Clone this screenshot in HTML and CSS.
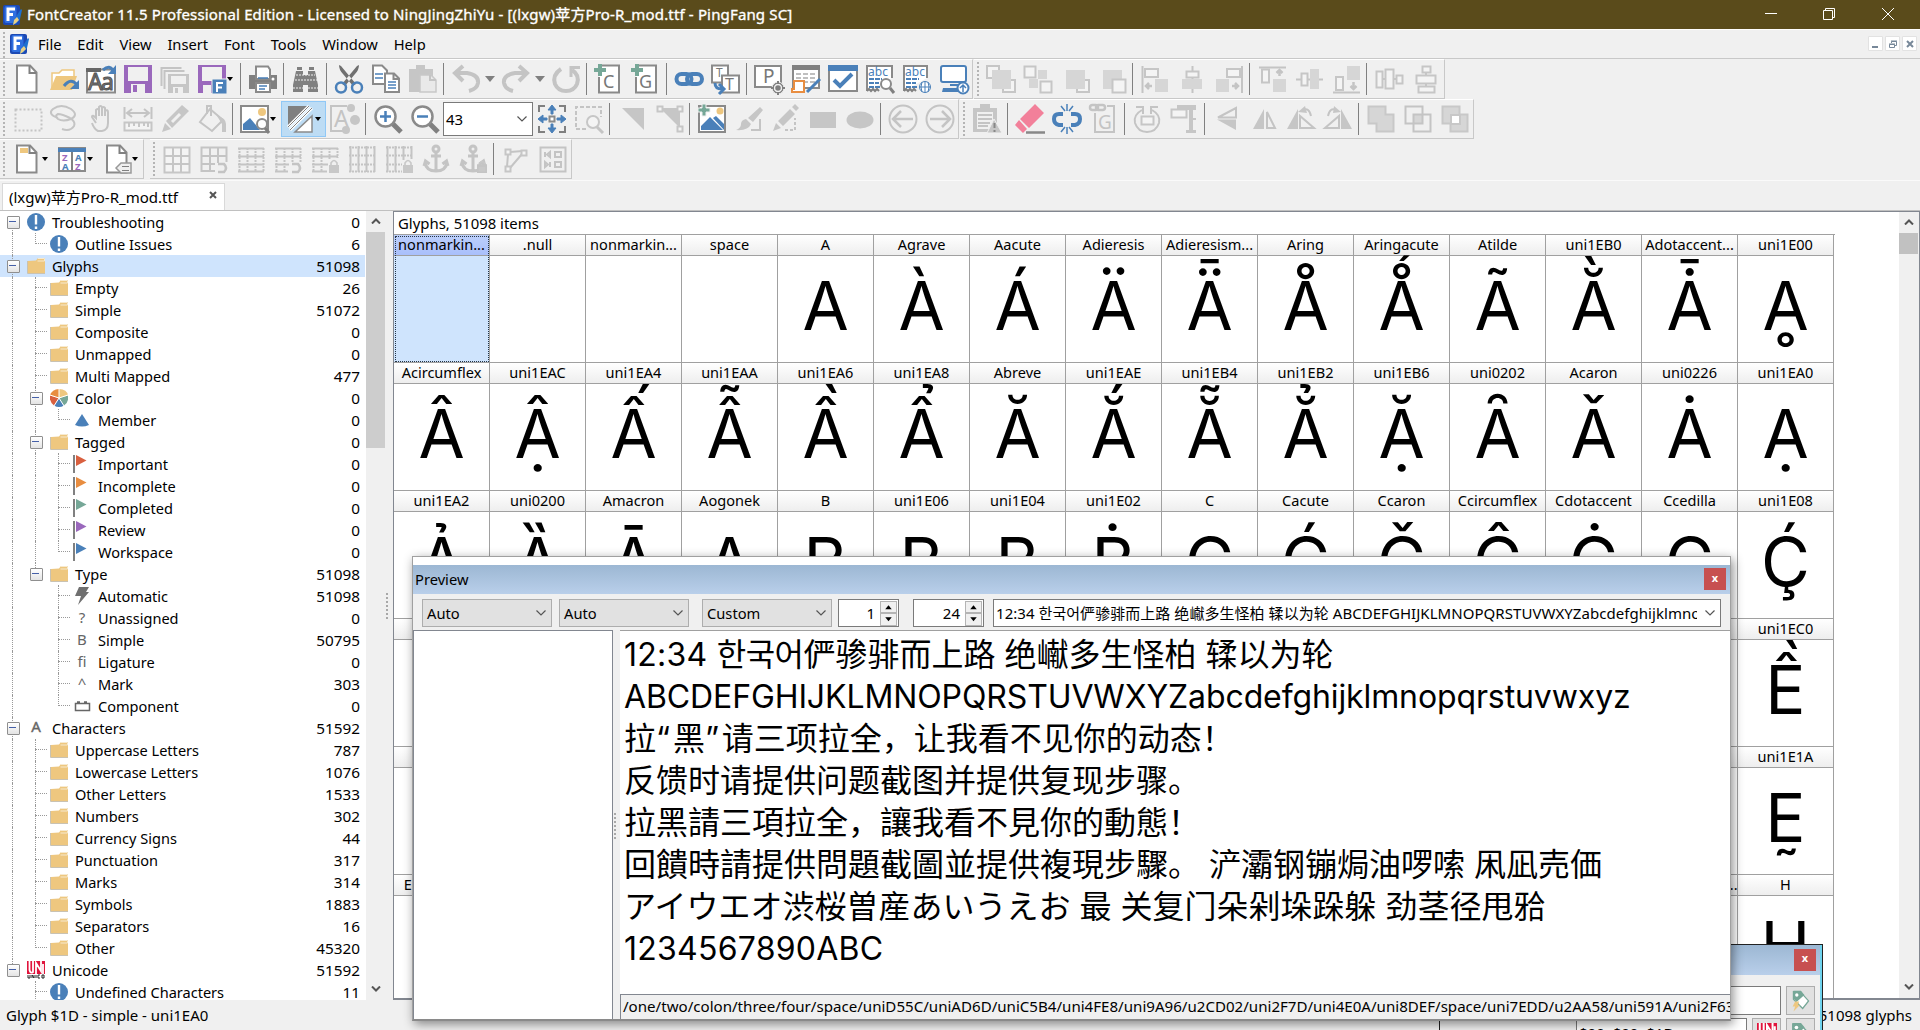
FILE: index.html
```html
<!DOCTYPE html>
<html lang="zh-CN">
<head>
<meta charset="utf-8">
<title>FontCreator 11.5 Professional Edition</title>
<link rel="stylesheet" href="styles.css">
</head>
<body>
<svg class="defs" aria-hidden="true">
  <symbol id="app" viewBox="0 0 20 20"><rect x="1" y="0" width="17" height="20" rx="2" fill="#1c49b4"/><rect x="2.500" y="1" width="12" height="17" rx="2" fill="#2f6fe0"/><path d="M6 16V4h7M6 9.500h5" stroke="#fff" stroke-width="3" fill="none"/><path d="M10 18l5-8 4-6 1 1-2 9-4 5z" fill="#1d6fd0"/><path d="M11 20l1-5 3-3 2 3-3 3z" fill="#e8cf86"/></symbol>
  <symbol id="folder" viewBox="0 0 18 18"><path d="M1 4l8-.5 2-2.500h7v15H1z" fill="#eec77f"/><path d="M11 1.500h6.500v2.500H10.500" stroke="#f7ead0" fill="none"/><path d="M.5 4v12.500H18" stroke="#c9c2b2" fill="none"/></symbol>
  <symbol id="warn" viewBox="0 0 18 18"><circle cx="9" cy="9" r="9" fill="#4a80b9"/><path d="M9 2v9.500M9 13.500v2.500" stroke="#fff" stroke-width="2.400"/></symbol>
  <symbol id="flag" viewBox="0 0 18 18"><path d="M2 0v18" stroke="#808080" stroke-width="2"/><path d="M4 0l10.500 5.500L4 11z" fill="currentColor"/></symbol>
  <symbol id="unicode" viewBox="0 0 18 18"><path d="M0 0h18v13H0z" fill="#e0143c"/><path d="M2.500 0v9q1 4 3.500 2V0M9 13V2l5 8V0M16 3v10" stroke="#fff" stroke-width="1.800" fill="none"/><path d="M0 13.500h18v4.500H0z" fill="#fff"/><path d="M1 14v3h2v-3M5 17v-3l2 3v-3M9 14v3M13 14h-2v3h2M15 14h2v3h-2z" stroke="#222" fill="none"/></symbol>
  <symbol id="tag" viewBox="0 0 20 24"><path d="M1 2h8l10 11-7 9L1 11z" fill="#fff" stroke="#76a797" stroke-width="1.500"/><path d="M1 1h9l4 5-9 8-4-4z" fill="#76a797"/><circle cx="5" cy="6" r="2" fill="#fff"/></symbol>
  <symbol id="bolt" viewBox="0 0 10 12"><path d="M4 0h5L7 4h3L2 12l2-6H1z" fill="#eec77f"/></symbol>
  <symbol id="lock" viewBox="0 0 10 14"><path d="M2 7V4q3-5 6 0v3" stroke="#c8c8c8" stroke-width="1.600" fill="none"/><path d="M0 6h10v8H0z" fill="#c8c8c8"/></symbol>
  <symbol id="anchor" viewBox="0 0 30 30"><circle cx="15" cy="5" r="3"/><path d="M15 8v18M10 12h10M4 18q1 9 11 9t11-9M3 22l1.500-5 4 3M27 22l-1.500-5-4 3"/></symbol>
</svg>

<header class="titlebar">
  <svg class="app"><use href="#app"/></svg>
  <h1>FontCreator 11.5 Professional Edition - Licensed to NingJingZhiYu - [(lxgw)苹方Pro-R_mod.ttf - PingFang SC]</h1>
  <svg class="wctl" viewBox="0 0 170 29"><path d="M15 13.500h12"/><path d="M73.500 10.500h9v9h-9zM75.500 10.500v-2h9v9h-2"/><path d="M132 8l12 12M144 8l-12 12"/></svg>
</header>

<nav class="menubar">
  <svg class="app"><use href="#app"/></svg>
  <span>File</span><span>Edit</span><span>View</span><span>Insert</span><span>Font</span><span>Tools</span><span>Window</span><span>Help</span>
  <svg class="mdi" viewBox="0 0 52 16"><path class="bx" d="M.5.5h14v14H.5zM17.500.5h14v14h-14zM34.500.5h14v14h-14z"/><path d="M4 11h6" stroke-width="2"/><path d="M21.500 8.500h5v3h-5zM21 8h6M23.500 7V5.500h5v4H27M23 5h6"/><path d="M39 5l6 6M45 5l-6 6" stroke-width="2"/></svg>
</nav>

<section class="bars">
 <div class="row">
  <div class="bar">
   <b><svg viewBox="0 0 30 30"><path class="w" d="M5 1.500h13l6.500 7v20H5z"/><path class="n" d="M17.500 2v7H24"/></svg></b>
   <b><svg viewBox="0 0 30 30"><path d="M3 25V9h7l3-3h12v6" fill="#fff" stroke="#eec77f" stroke-width="1.500"/><path d="M1 26l6-14h21l-5 14z" fill="#eec77f"/><path d="M15 22q7-9 13-1" class="nb" stroke-width="3"/><path d="M30 16v9h-9z" fill="#4a80b9"/></svg></b>
   <b><svg viewBox="0 0 30 30"><path class="w" d="M1 5.500h28v23H1z"/><path d="M0 4h15v4H0z" fill="#666"/><text x="2" y="26" font-size="23" fill="#555" stroke="#555" textLength="26">Aa</text><path d="M17 6q7-6 10 1" class="nb" stroke-width="3"/><path d="M30 1v9h-8z" fill="#4a80b9"/></svg></b>
   <b><svg viewBox="0 0 30 30"><path d="M1 1h28v28H1z" fill="#9a68bc"/><path d="M5 3h20v14H5zM8 20h14v9H8z" fill="#f0f0f0"/><path d="M10 21h4v7h-4z" fill="#9a68bc"/></svg></b>
   <b><svg viewBox="0 0 30 30"><path class="nd" d="M1.500 22V4h20M4.500 25V7h20"/><path class="d" d="M8 10h21v19H8z"/><path d="M11 12h15v8H11zM13 23h10v6H13z" fill="#f0f0f0"/><path class="d" d="M15 24h3v5h-3z"/></svg></b>
   <b class="drop s"><svg viewBox="0 0 30 30"><path d="M1 1h28v28H1z" fill="#9a68bc"/><path d="M5 3h20v14H5zM6 21h8v8H6z" fill="#f0f0f0"/><path d="M15 15h15v15H15z" fill="#4a80b9" stroke="#f0f0f0"/><path d="M20 28v-9h6M20 23.500h5" stroke="#fff" stroke-width="2" fill="none"/></svg></b>
   <i></i>
   <b><svg viewBox="0 0 30 30"><path class="g" d="M1 11h28v14H1z"/><path class="w" d="M8 2.500h12l2 3V15H8zM8 19h14v9H8z"/><path class="nb" d="M11 22h8M11 25h6M10 14h10" stroke-width="1.500"/><circle cx="25" cy="15" r="1.500" fill="#fff"/></svg></b>
   <i></i>
   <b><svg viewBox="0 0 30 30"><path class="g" d="M5 7h7v4h5V7h7l3 14v7H17v-7h-5v7H2v-7zM6 3h5v3H6zM18 3h5v3h-5z"/><path d="M2 24h10M17 24h10M5 11h19M4 16h22" stroke="#f0f0f0" stroke-dasharray="2 1"/></svg></b>
   <i></i>
   <b><svg viewBox="0 0 30 30"><path d="M5 1q0 5 4 9l10 12 3-2L7 2zM25 1q0 5-4 9L11 22l-3-2L23 2z" fill="#707070"/><g class="nb" stroke-width="2.500"><circle cx="7" cy="23.500" r="5"/><circle cx="23" cy="23.500" r="5"/></g></svg></b>
   <b><svg viewBox="0 0 30 30"><path class="w" d="M2 1.500h9l5 5V20H2z"/><path class="nb" d="M4 10h8M4 14h8" stroke-width="1.500"/><path class="w" d="M14 9.500h9l5 5V28H14zM22.500 10v5H28"/><path class="nb" d="M17 18h8M17 21h8M17 24h8" stroke-width="1.500"/></svg></b>
   <b><svg viewBox="0 0 30 30"><path class="d" d="M1 5h24v23H1zM8 1h9v5H8z"/><path d="M12 11h11l5 5v12H12z" fill="#e9e9e9" stroke="#c8c8c8" stroke-width="1.500"/><path class="nd" d="M22 11v5h6"/></svg></b>
   <i></i>
   <b class="drop"><svg viewBox="0 0 30 30"><path class="nd" d="M4 9h12q12 2 11 10-1 6-9 8" stroke-width="4"/><path class="nd" d="M12 2L4 9l8 8" stroke-width="4"/></svg></b>
   <b class="drop"><svg viewBox="0 0 30 30"><path class="nd" d="M26 9H14Q2 11 3 19q1 6 9 8" stroke-width="4"/><path class="nd" d="M18 2l8 7-8 8" stroke-width="4"/></svg></b>
   <b><svg viewBox="0 0 30 30"><path class="nd" d="M10 5Q1 11 4 20q3 7 11 7t11-7q3-9-5-14" stroke-width="4"/><path class="nd" d="M29 3.500h-9V13" stroke-width="3"/></svg></b>
   <i></i>
   <b><svg viewBox="0 0 30 30"><path class="w" d="M7 1.500h18v27H5V13"/><path class="gr" d="M4 0h4v4h4v4H8v4H4V8H0V4h4z"/><text x="9" y="24" font-size="18">C</text></svg></b>
   <b><svg viewBox="0 0 30 30"><path class="w" d="M7 1.500h18v27H5V13"/><path class="gr" d="M4 0h4v4h4v4H8v4H4V8H0V4h4z"/><text x="8" y="24" font-size="18">G</text></svg></b>
   <i></i>
   <b><svg viewBox="0 0 30 30"><g class="nb" stroke-width="4"><rect x="2.500" y="10" width="15" height="10" rx="5"/><rect x="13" y="10" width="15" height="10" rx="5"/></g></svg></b>
   <b><svg viewBox="0 0 30 30"><path class="w" d="M1 1.500h16v17H1z"/><text x="5" y="13" font-size="12">T</text><path class="w" d="M11 11.500h17v17H11z"/><text x="14" y="26" font-size="16">T</text><path class="nb" d="M4 19q0 6 7 6M8 20l5 5-5 5" stroke-width="3"/></svg></b>
   <i></i>
   <b><svg viewBox="0 0 30 30"><path class="w" d="M1 2h26v21H1z"/><text x="9" y="19" font-size="19">P</text><circle cx="24" cy="24" r="6" class="g" stroke="#f0f0f0"/><circle cx="24" cy="24" r="3.500" fill="none" stroke="#f0f0f0" stroke-width="1.500"/><path d="M24 17v3M24 28v3M17 24h3M28 24h3" stroke="#808080" stroke-width="2"/></svg></b>
   <b><svg viewBox="0 0 30 30"><path class="w" d="M2 2h26v22H2z"/><path class="g" d="M1 1h28v5H1z"/><path d="M5 10h20M5 14h20M5 18h20" stroke="#aaa" stroke-width="1.500" stroke-dasharray="5 2"/><path d="M3 17h10v11H1v-3h2z" fill="#fff" stroke="#e88d40" stroke-width="2"/><path class="nb" d="M16 28L29 15" stroke-width="3"/></svg></b>
   <b><svg viewBox="0 0 30 30"><path class="w" d="M1 2h28v25H1z"/><path d="M0 1h30v6H0z" fill="#4a80b9"/><path class="nb" d="M6 16l6 6 12-12" stroke-width="4"/></svg></b>
   <b><svg viewBox="0 0 30 30"><path d="M2 27V2h25v12" class="w"/><text x="3" y="12" font-size="12" class="bt" textLength="20">abc</text><path class="nb" d="M4 15h13M4 19h10M4 23h12" stroke-dasharray="5 1" stroke-width="2"/><path d="M2 27l2-2 2 2 2-2 2 2 2-2 2 2" class="n"/><circle cx="21" cy="20" r="5" class="w"/><path d="M25 24l4 5" class="n" stroke-width="3"/></svg></b>
   <b><svg viewBox="0 0 30 30"><path d="M2 27V2h23v12" class="w"/><text x="3" y="12" font-size="12" class="bt" textLength="20">abc</text><path class="nb" d="M4 15h13M4 19h10M4 23h12" stroke-dasharray="5 1" stroke-width="2"/><path d="M2 27l2-2 2 2 2-2 2 2 2-2 2 2" class="n"/><circle cx="23" cy="23" r="5.500" fill="#fff" stroke="#4a80b9"/><path class="nb" d="M17.500 23h11M23 17.500v11M20 18q-2 5 0 10M26 18q2 5 0 10" stroke-width="1"/></svg></b>
   <b><svg viewBox="0 0 30 30"><rect x="2" y="2" width="25" height="16" rx="2" fill="#fff" stroke="#4a80b9" stroke-width="2"/><path d="M11 20h8v2h-8zM4 24h15v4H3z" fill="#4a80b9"/><circle cx="24" cy="24" r="5.500" fill="#fff" stroke="#4a80b9" stroke-width="2"/><path class="nb" d="M24 28v-7M21 24l3-3 3 3" stroke-width="1.500"/></svg></b>
  </div>
  <div class="bar">
   <b><svg viewBox="0 0 30 30"><path class="wd" d="M1 2h12v12H1zM17 16h12v12H17z"/><path class="df" d="M6 6h19v19H6z"/></svg></b>
   <b><svg viewBox="0 0 30 30"><path class="df" d="M15 6h9v9h-9zM6 15h9v9H6z"/><path class="wd" d="M1.500 2.500h11v11h-11zM17.500 17.500h11v11h-11z"/></svg></b>
   <b><svg viewBox="0 0 30 30"><path class="wd" d="M17 16h12v12H17z"/><path class="df" d="M6 6h19v19H6z"/></svg></b>
   <b><svg viewBox="0 0 30 30"><path class="df" d="M6 6h19v19H6z"/><path class="wd" d="M15.500 15.500h13v13h-13z"/></svg></b>
   <i></i>
   <b><svg viewBox="0 0 30 30"><path class="nd" d="M2.500 2v27"/><path class="wd" d="M5 5h13v8H5z"/><path class="df" d="M15 15h13v13H15z"/><path class="nd" d="M12 22H6M9 19l-3 3 3 3" stroke-width="2.500"/></svg></b>
   <b><svg viewBox="0 0 30 30"><path class="nd" d="M15.500 2v27"/><path class="wd" d="M9.500 7.500h12v6h-12z"/><path class="df" d="M5 15h20v10H5z"/></svg></b>
   <b><svg viewBox="0 0 30 30"><path class="nd" d="M28 2v27"/><path class="wd" d="M13 5h13v8H13z"/><path class="df" d="M2 15h13v13H2z"/><path class="nd" d="M18 22h6M21 19l3 3-3 3" stroke-width="2.500"/></svg></b>
   <i></i>
   <b><svg viewBox="0 0 30 30"><path class="nd" d="M2 3.500h27"/><path class="wd" d="M5 5.500h7v13H5z"/><path class="df" d="M16 15h13v13H16z"/><path class="nd" d="M22.500 12V6M19.500 9l3-3 3 3" stroke-width="2.500"/></svg></b>
   <b><svg viewBox="0 0 30 30"><path class="nd" d="M2 15.500h27"/><path class="wd" d="M7.500 9.500h6v12h-6z"/><path class="df" d="M16 5h9v20h-9z"/></svg></b>
   <b><svg viewBox="0 0 30 30"><path class="nd" d="M2 28.500h27"/><path class="wd" d="M5 13h7v13H5z"/><path class="df" d="M16 2h13v14H16z"/><path class="nd" d="M22.500 18v6M19.500 22l3 3 3-3" stroke-width="2.500"/></svg></b>
   <i></i>
   <b><svg viewBox="0 0 30 30"><path class="nd" d="M2 15h27"/><path class="wd" d="M2.500 7.500h6v16h-6zM11.500 5.500h8v19h-8zM22.500 11.500h6v8h-6z"/></svg></b>
   <b><svg viewBox="0 0 30 30"><path class="nd" d="M15 2v26"/><path class="wd" d="M11.500 2.500h8v6h-8zM5.500 11.500h19v8h-19zM7.500 22.500h16v6h-16z"/></svg></b>
  </div>
 </div>
 <div class="row">
  <div class="bar">
   <b><svg viewBox="0 0 30 30"><path class="nd" d="M3.500 5.500h26v21h-26z" stroke-dasharray="2 2"/></svg></b>
   <b><svg viewBox="0 0 30 30"><path class="nd" d="M9 14Q-2 10 4 5q8-6 18 0 8 6 0 10-8 3-13 0-4-3 0-5 4 0 12 4 6 4 4 8-4 6-12 3"/></svg></b>
   <b><svg viewBox="0 0 30 30"><path class="nd" d="M9 19l-4-6q0-3 4 1V6q2-2 3 0v6-9q2-2 3 0v9-8q2-2 3 0v8-5q3-2 3 1v11q0 7-6 8h-4q-4-2-6-8" transform="translate(1)"/></svg></b>
   <b><svg viewBox="0 0 30 30"><path class="nd" d="M1.500 3v12M28.500 3v12M4 9h22M9 5L4 9l5 4M21 5l5 4-5 4"/><path class="wd" d="M1.500 18.500h27v8h-27zM6 19v4M11 19v3M16 19v4M21 19v3M25 19v4"/></svg></b>
   <b><svg viewBox="0 0 30 30"><path class="d" d="M2 28l3-9 6 6zM6 17L22 1l7 6-17 17z"/><path d="M12 18l8-8" stroke="#f0f0f0" stroke-width="3"/></svg></b>
   <b><svg viewBox="0 0 30 30"><path class="nd" d="M13 5l13 11-11 11L3 18zM10 10V2h4v10"/><path class="d" d="M20 12q9 2 9 8v8h-4v-8z"/></svg></b>
   <i></i>
   <b class="drop s"><svg viewBox="0 0 30 30"><path class="w" d="M1 2h27v26H1z"/><circle cx="22" cy="8" r="4" fill="#eec77f"/><path d="M3 26v-6l7-6 10 12z" fill="#4a80b9"/><circle cx="22" cy="20" r="5" class="w"/><path class="n" d="M25 24l4 5" stroke-width="3"/></svg></b>
   <b class="drop s on"><svg viewBox="0 0 30 30"><path d="M3 2h20L3 22z" fill="#808080"/><path d="M5 26L27 4M3 23L24 2" stroke="#fff" stroke-width="3"/><path d="M5 26L27 4M3 23L24 2" stroke="#808080"/><path class="w" d="M27 12v16H10z" stroke-width="1.500"/></svg></b>
   <b><svg viewBox="0 0 30 30"><path class="nd" d="M17 2H1v25h13"/><text x="4" y="23" font-size="23" class="dt">A</text><circle class="d" cx="21" cy="4" r="4"/><circle class="d" cx="25" cy="16" r="5"/><circle class="d" cx="16" cy="26" r="4"/></svg></b>
   <i></i>
   <b><svg viewBox="0 0 30 30"><path class="n" d="M20 20l8 8" stroke-width="5"/><circle cx="12.500" cy="12.500" r="10" class="w" stroke-width="2.500"/><path class="nb" d="M7 12.500h11M12.500 7v11" stroke-width="2.500"/></svg></b>
   <b><svg viewBox="0 0 30 30"><path class="n" d="M20 20l8 8" stroke-width="5"/><circle cx="12.500" cy="12.500" r="10" class="w" stroke-width="2.500"/><path class="nb" d="M7 12.500h11" stroke-width="2.500"/></svg></b>
   <span class="zoombox">43<svg class="chev" viewBox="0 0 10 6"><path d="M.5.5L5 5 9.500.5"/></svg></span>
   <b><svg viewBox="0 0 30 30"><path class="n" d="M2 8V2h6M22 2h6v6M28 22v6h-6M8 28H2v-6"/><path class="w" d="M12.500 12.500h5v5h-5z"/><path d="M15 1l4 5h-3v4h-2V6h-3zM15 29l4-5h-3v-4h-2v4h-3zM1 15l5-4v3h4v2H6v3zM29 15l-5-4v3h-4v2h4v3z" fill="#4a80b9" stroke="#4a80b9"/></svg></b>
   <b><svg viewBox="0 0 30 30"><path class="nd" d="M12 25H2V3h25v10" stroke-dasharray="4 2"/><circle cx="19" cy="18" r="6" class="wd"/><path class="nd" d="M23 23l6 6" stroke-width="3"/></svg></b>
   <i></i>
   <b><svg viewBox="0 0 30 30"><path class="d" d="M5 4h22v22z"/></svg></b>
   <b><svg viewBox="0 0 30 30"><path class="d" d="M6 4h20v20z"/><path class="wd" d="M3.500 2.500h5v5h-5zM23.500 2.500h5v5h-5zM23.500 22.500h5v5h-5z"/></svg></b>
   <i></i>
   <b><svg viewBox="0 0 30 30"><path class="w" d="M2 2h26v26H2z"/><path class="gr" stroke="#f0f0f0" d="M5 0h4v4h4v4H9v4H5V8H1V4h4z"/><circle cx="23" cy="7" r="3.500" fill="#eec77f"/><path d="M4 26v-4l9-9 13 13zM16 14l3-2 8 8v6z" fill="#4a80b9"/></svg></b>
   <b><svg viewBox="0 0 30 30"><path class="d" d="M26 3l3 3-10 12-5-4zM12 15l5 5q-3 7-15 6 5-2 5-6t5-5z"/><path class="nd" d="M17 26h9V15"/></svg></b>
   <b><svg viewBox="0 0 30 30"><path class="d" d="M2 27l3-8 5 5zM7 17L19 5l5 5-12 12zM21 3l3-3 4 4-3 3z"/><path class="nd" d="M14 26h10V14" stroke-dasharray="3 2"/></svg></b>
   <b><svg viewBox="0 0 30 30"><path class="d" d="M2 8h26v16H2z"/></svg></b>
   <b><svg viewBox="0 0 30 30"><ellipse class="d" cx="15" cy="16" rx="13.500" ry="8.500"/></svg></b>
   <i></i>
   <b><svg viewBox="0 0 30 30"><circle class="nd" cx="15" cy="15" r="13.500"/><path class="nd" d="M25 15H6M13 7l-8 8 8 8" stroke-width="2.500"/></svg></b>
   <b><svg viewBox="0 0 30 30"><circle class="nd" cx="15" cy="15" r="13.500"/><path class="nd" d="M5 15h19M17 7l8 8-8 8" stroke-width="2.500"/></svg></b>
  </div>
  <div class="bar">
   <b><svg viewBox="0 0 30 30"><path class="d" d="M1 4h24v24H1zM8 0h10v7H8z"/><path d="M5 8h16v17H5z" fill="#f0f0f0"/><path class="nd" d="M6 11h14M6 15h14M6 19h12M6 22h10"/><path class="d" d="M22 15l8 14H15z" stroke="#f0f0f0"/><path d="M22.500 19v5M22.500 26v2" stroke="#888" stroke-width="2"/></svg></b>
   <i></i>
   <b><svg viewBox="0 0 30 30"><path d="M20 0l9 9-15 15-9-9zM4 16l8 9-4 4-8-8z" fill="#f2809a"/><path d="M11 28.500h19" stroke="#888" stroke-width="2.500"/></svg></b>
   <b><svg viewBox="0 0 30 30"><path class="nb" d="M11 21H7q-5-1-5-6t5-5h4M19 21h4q5-1 5-6t-5-5h-4" stroke-width="4"/><path class="nb" d="M15 0v7M9 2l4 5M21 2l-4 5M15 30v-7M9 28l4-5M21 28l-4-5" stroke-width="1.500"/></svg></b>
   <b><svg viewBox="0 0 30 30"><path class="nd" d="M18 2h7v26H6V9"/><text x="9" y="25" font-size="19" class="dt">G</text><g class="nd" stroke-width="2.500"><rect x="1" y="1" width="8" height="5" rx="2.500"/><rect x="7" y="1" width="9" height="5" rx="2.500"/></g></svg></b>
   <i></i>
   <b><svg viewBox="0 0 30 30"><path class="nd" d="M10 6Q1 11 3 19q3 9 12 9t12-9q2-8-7-13M4 3h7v7M26 3h-7v7"/><path class="wd" d="M9.500 12.500h12v8h-12z"/></svg></b>
   <b><svg viewBox="0 0 30 30"><path class="d" d="M8 1h19v5h-3v20h3v3H17v-3h3V6H8z"/><path class="wd" d="M2.500 5.500h15v8h-15zM20 15h7"/></svg></b>
   <i></i>
   <b><svg viewBox="0 0 30 30"><path class="nd" d="M6 13.500L24 4v9.500z"/><path class="d" d="M5 15.500h19V26z"/></svg></b>
   <b><svg viewBox="0 0 30 30"><path class="d" d="M4 25L15 5v20z"/><path class="nd" d="M18 24V8l8 16z"/></svg></b>
   <b><svg viewBox="0 0 30 30"><path class="d" d="M1 25L12 5v20z"/><path class="nd" d="M14 24V12l14 12zM17 6q6-3 8 6"/><path class="d" d="M12 8l7-6 2 7z"/></svg></b>
   <b><svg viewBox="0 0 30 30"><path class="d" d="M29 25L18 5v20z"/><path class="nd" d="M16 24V12L2 24zM5 12q2-9 8-6"/><path class="d" d="M18 8l-7-6-1 7z"/></svg></b>
   <i></i>
   <b><svg viewBox="0 0 30 30"><path class="df" d="M2.500 2.500h17v8h8v17h-17v-8h-8z" stroke="#c8c8c8" stroke-width="2"/></svg></b>
   <b><svg viewBox="0 0 30 30"><path class="df" d="M11 11h9v9h-9z"/><path class="nd" d="M2.500 2.500h17v17h-17zM10.500 10.500h17v17h-17z"/></svg></b>
   <b><svg viewBox="0 0 30 30"><path class="df" d="M2.500 2.500h17v8h8v17h-17v-8h-8z" stroke="#c8c8c8" stroke-width="2"/><path d="M11 11h9v9h-9z" fill="#fff" stroke="#c8c8c8" stroke-width="2"/></svg></b>
  </div>
 </div>
 <div class="row">
  <div class="bar">
   <b class="drop s"><svg viewBox="0 0 30 30"><path class="w" d="M5 1.500h13l6.500 7v20H5z"/><path class="n" d="M17.500 2v7H24"/><path d="M8 4h8v5H8z" fill="#eec77f"/></svg></b>
   <b class="drop s"><svg viewBox="0 0 30 30"><path class="w" d="M2 4h26v23H2z"/><path d="M1 4h28v4H1z" fill="#4a80b9"/><path class="n" d="M15 8v19"/><g font-size="9.500" font-weight="bold"><text x="5" y="16.500" class="pt">Z</text><text x="5" y="26" class="bt">A</text><text x="18" y="16.500" class="bt">A</text><text x="18" y="26" class="pt">Z</text></g></svg></b>
   <b class="drop s"><svg viewBox="0 0 30 30"><path class="w" d="M5 1.500h13l6.500 7v20H5z"/><path class="n" d="M17.500 2v7H24"/><path d="M14 24l5-5h10v10H19z" fill="#f0f0f0" stroke="#999" stroke-width="1.500"/><path class="n thin" d="M20 22.500h7M20 26.500h7"/></svg></b>
  </div>
  <div class="bar gap">
   <b><svg viewBox="0 0 30 30"><path class="wd" d="M2.500 3.500h25v25h-25zM11 3v25M19 3v25M2 12h25M2 20h25"/></svg></b>
   <b><svg viewBox="0 0 30 30"><path class="nd" d="M16 27H2.500V3.500h25V18M11 3v24M19 3v16M2 12h25M2 20h14"/><path class="nd" d="M19 20h6q4 4 0 8h-6" stroke-width="2.500"/></svg></b>
   <b><svg viewBox="0 0 30 30"><path class="nd" d="M2 4.500h26M2 12.500h26M2 20.500h26M2 27.500h26"/><path class="nd" d="M3.500 4v24M11.500 4v24M19.500 4v24M27.500 4v24" stroke-dasharray="2 1"/></svg></b>
   <b><svg viewBox="0 0 30 30"><path class="nd" d="M2 4.500h26M2 12.500h26M2 20.500h14M2 27.500h13"/><path class="nd" d="M3.500 4v24M11.500 4v24M19.500 4v15M27.500 4v14" stroke-dasharray="2 1"/><path class="nd" d="M19 20h6q4 4 0 8h-6" stroke-width="2.500"/></svg></b>
   <b><svg viewBox="0 0 30 30"><path class="nd" d="M2 4.500h26M2 12.500h26M2 20.500h16M2 27.500h15"/><path class="nd" d="M3.500 4v24M11.500 4v24M19.500 4v12M27.500 4v10" stroke-dasharray="2 1"/><use href="#lock" x="19" y="15" width="10" height="14"/></svg></b>
   <b><svg viewBox="0 0 30 30"><path class="nd" d="M3.500 2v26M11.500 2v26M19.500 2v26M27.500 2v26"/><path class="nd" d="M2 3.500h26M2 11.500h26M2 20.500h26M2 27.500h26" stroke-dasharray="2 1"/></svg></b>
   <b><svg viewBox="0 0 30 30"><path class="nd" d="M3.500 2v26M11.500 2v26M19.500 2v14M27.500 2v13"/><path class="nd" d="M2 3.500h26M2 11.500h26M2 20.500h16M2 27.500h16" stroke-dasharray="2 1"/><use href="#lock" x="19" y="15" width="10" height="14"/></svg></b>
   <b><svg viewBox="0 0 30 30" class="nd anc"><use href="#anchor"/></svg></b>
   <b><svg viewBox="0 0 30 30" class="nd anc"><use href="#anchor"/><use href="#lock" x="19" y="16" width="10" height="13"/></svg></b>
   <i></i>
   <b><svg viewBox="0 0 30 30"><path class="nd" d="M7 10l-1 13M9 8l13-1M21 10L9 24"/><path class="wd" d="M4.500 5.500h5v5h-5zM20.500 6.500h5v5h-5zM4.500 22.500h5v5h-5z"/></svg></b>
   <b><svg viewBox="0 0 30 30"><path class="nd" d="M2.500 3.500h25v24h-25z"/><path class="nd" d="M7 8v5M12 8l-3 2.500 3 2.500zM12 18v5M7 18l3 2.500L7 23zM17 8h6v5h-6zM17 18h6v5h-6z"/></svg></b>
  </div>
 </div>
</section>

<div class="tabs"><div class="tab"><span>(lxgw)苹方Pro-R_mod.ttf</span><svg viewBox="0 0 8 8"><path d="M1 1l6 6M7 1L1 7"/></svg></div></div>

<main>
 <aside>
  <ul class="tree">
   <li><s class="x first"></s><svg class="ti"><use href="#warn"/></svg><span>Troubleshooting</span><em>0</em></li>
   <li><s class="v"></s><s class="l"></s><svg class="ti"><use href="#warn"/></svg><span>Outline Issues</span><em>6</em></li>
   <li class="sel"><s class="x"></s><svg class="ti"><use href="#folder"/></svg><span>Glyphs</span><em>51098</em></li>
   <li><s class="v"></s><s class="t"></s><svg class="ti"><use href="#folder"/></svg><span>Empty</span><em>26</em></li>
   <li><s class="v"></s><s class="t"></s><svg class="ti"><use href="#folder"/></svg><span>Simple</span><em>51072</em></li>
   <li><s class="v"></s><s class="t"></s><svg class="ti"><use href="#folder"/></svg><span>Composite</span><em>0</em></li>
   <li><s class="v"></s><s class="t"></s><svg class="ti"><use href="#folder"/></svg><span>Unmapped</span><em>0</em></li>
   <li><s class="v"></s><s class="t"></s><svg class="ti"><use href="#folder"/></svg><span>Multi Mapped</span><em>477</em></li>
   <li><s class="v"></s><s class="x"></s><svg class="ti" viewBox="0 0 18 18"><path d="M9 9V0q8 0 9 6.500z" fill="#eec77f"/><path d="M9 9l9-2.500q1 7-4 10z" fill="#76a797"/><path d="M9 9l5 7.500q-5 3-10 0z" fill="#4a80b9"/><path d="M9 9l-5 7.500q-5-4-4-10z" fill="#d9603f"/><path d="M9 9L0 6.500Q2 0 9 0z" fill="#e88d40"/><path d="M9 9V0M9 9l9-3M9 9l5 8M9 9l-5 8M9 9L0 6" stroke="#fff"/></svg><span>Color</span><em>0</em></li>
   <li><s class="v"></s><s class="v"></s><s class="l"></s><svg class="ti" viewBox="0 0 18 18"><path d="M9 3l7 11q-7 3-14 0z" fill="#4a80b9"/></svg><span>Member</span><em>0</em></li>
   <li><s class="v"></s><s class="x"></s><svg class="ti"><use href="#folder"/></svg><span>Tagged</span><em>0</em></li>
   <li><s class="v"></s><s class="v"></s><s class="t"></s><svg class="ti fl red"><use href="#flag"/></svg><span>Important</span><em>0</em></li>
   <li><s class="v"></s><s class="v"></s><s class="t"></s><svg class="ti fl orange"><use href="#flag"/></svg><span>Incomplete</span><em>0</em></li>
   <li><s class="v"></s><s class="v"></s><s class="t"></s><svg class="ti fl green"><use href="#flag"/></svg><span>Completed</span><em>0</em></li>
   <li><s class="v"></s><s class="v"></s><s class="t"></s><svg class="ti fl purple"><use href="#flag"/></svg><span>Review</span><em>0</em></li>
   <li><s class="v"></s><s class="v"></s><s class="l"></s><svg class="ti fl blue"><use href="#flag"/></svg><span>Workspace</span><em>0</em></li>
   <li><s class="v"></s><s class="x last"></s><svg class="ti"><use href="#folder"/></svg><span>Type</span><em>51098</em></li>
   <li><s class="v"></s><s></s><s class="t"></s><svg class="ti" viewBox="0 0 18 18"><path d="M6 0h10l-3 5h3L5 18l3-9H2z" fill="#707070"/></svg><span>Automatic</span><em>51098</em></li>
   <li><s class="v"></s><s></s><s class="t"></s><q>?</q><span>Unassigned</span><em>0</em></li>
   <li><s class="v"></s><s></s><s class="t"></s><q>B</q><span>Simple</span><em>50795</em></li>
   <li><s class="v"></s><s></s><s class="t"></s><q>fi</q><span>Ligature</span><em>0</em></li>
   <li><s class="v"></s><s></s><s class="t"></s><q>^</q><span>Mark</span><em>303</em></li>
   <li><s class="v"></s><s></s><s class="l"></s><svg class="ti" viewBox="0 0 18 18"><path d="M2.500 6.500h14v7h-14zM4 5h3M11 5h3" fill="none" stroke="#666" stroke-width="1.500"/></svg><span>Component</span><em>0</em></li>
   <li><s class="x"></s><q class="big">A</q><span>Characters</span><em>51592</em></li>
   <li><s class="v"></s><s class="t"></s><svg class="ti"><use href="#folder"/></svg><span>Uppercase Letters</span><em>787</em></li>
   <li><s class="v"></s><s class="t"></s><svg class="ti"><use href="#folder"/></svg><span>Lowercase Letters</span><em>1076</em></li>
   <li><s class="v"></s><s class="t"></s><svg class="ti"><use href="#folder"/></svg><span>Other Letters</span><em>1533</em></li>
   <li><s class="v"></s><s class="t"></s><svg class="ti"><use href="#folder"/></svg><span>Numbers</span><em>302</em></li>
   <li><s class="v"></s><s class="t"></s><svg class="ti"><use href="#folder"/></svg><span>Currency Signs</span><em>44</em></li>
   <li><s class="v"></s><s class="t"></s><svg class="ti"><use href="#folder"/></svg><span>Punctuation</span><em>317</em></li>
   <li><s class="v"></s><s class="t"></s><svg class="ti"><use href="#folder"/></svg><span>Marks</span><em>314</em></li>
   <li><s class="v"></s><s class="t"></s><svg class="ti"><use href="#folder"/></svg><span>Symbols</span><em>1883</em></li>
   <li><s class="v"></s><s class="t"></s><svg class="ti"><use href="#folder"/></svg><span>Separators</span><em>16</em></li>
   <li><s class="v"></s><s class="l"></s><svg class="ti"><use href="#folder"/></svg><span>Other</span><em>45320</em></li>
   <li><s class="x last"></s><svg class="ti"><use href="#unicode"/></svg><span>Unicode</span><em>51592</em></li>
   <li><s></s><s class="t"></s><svg class="ti"><use href="#warn"/></svg><span>Undefined Characters</span><em>11</em></li>
  </ul>
  <div class="sbar"><svg viewBox="0 0 10 6"><path d="M1 5.500l4-4 4 4"/></svg><div class="thumb tall"></div><svg class="dn" viewBox="0 0 10 6"><path d="M1 .5l4 4 4-4"/></svg></div>
 </aside>
 <div class="split"><u></u></div>
 <section class="glyphs">
  <div class="inner">
   <p>Glyphs, 51098 items</p>
   <div class="grid">
    <div class="sel"><h2>nonmarkin...</h2></div><div><h2>.null</h2></div><div><h2>nonmarkin...</h2></div><div><h2>space</h2></div><div><h2>A</h2>A</div><div><h2>Agrave</h2>À</div><div><h2>Aacute</h2>Á</div><div><h2>Adieresis</h2>Ä</div><div><h2>Adieresism...</h2>Ǟ</div><div><h2>Aring</h2>Å</div><div><h2>Aringacute</h2>Ǻ</div><div><h2>Atilde</h2>Ã</div><div><h2>uni1EB0</h2>Ằ</div><div><h2>Adotaccent...</h2>Ǡ</div><div><h2>uni1E00</h2>Ḁ</div>
    <div><h2>Acircumflex</h2>Â</div><div><h2>uni1EAC</h2>Ậ</div><div><h2>uni1EA4</h2>Ấ</div><div><h2>uni1EAA</h2>Ẫ</div><div><h2>uni1EA6</h2>Ầ</div><div><h2>uni1EA8</h2>Ẩ</div><div><h2>Abreve</h2>Ă</div><div><h2>uni1EAE</h2>Ắ</div><div><h2>uni1EB4</h2>Ẵ</div><div><h2>uni1EB2</h2>Ẳ</div><div><h2>uni1EB6</h2>Ặ</div><div><h2>uni0202</h2>Ȃ</div><div><h2>Acaron</h2>Ǎ</div><div><h2>uni0226</h2>Ȧ</div><div><h2>uni1EA0</h2>Ạ</div>
    <div><h2>uni1EA2</h2>Ả</div><div><h2>uni0200</h2>Ȁ</div><div><h2>Amacron</h2>Ā</div><div><h2>Aogonek</h2>Ą</div><div><h2>B</h2>B</div><div><h2>uni1E06</h2>Ḇ</div><div><h2>uni1E04</h2>Ḅ</div><div><h2>uni1E02</h2>Ḃ</div><div><h2>C</h2>C</div><div><h2>Cacute</h2>Ć</div><div><h2>Ccaron</h2>Č</div><div><h2>Ccircumflex</h2>Ĉ</div><div><h2>Cdotaccent</h2>Ċ</div><div><h2>Ccedilla</h2>Ç</div><div><h2>uni1E08</h2>Ḉ</div>
    <div><h2></h2></div><div class="hid"></div><div><h2></h2></div><div><h2>uni1EC0</h2>Ề</div>
    <div><h2></h2></div><div class="hid"></div><div><h2></h2></div><div><h2>uni1E1A</h2>Ḛ</div>
    <div><h2>Edotaccent</h2></div><div class="hid"></div><div><h2>Gcommaacc...</h2></div><div><h2>H</h2>H</div>
   </div>
  </div>
  <div class="sbar"><svg viewBox="0 0 10 6"><path d="M1 5.500l4-4 4 4"/></svg><div class="thumb"></div><svg class="dn" viewBox="0 0 10 6"><path d="M1 .5l4 4 4-4"/></svg></div>
 </section>
</main>

<footer><span>Glyph $1D - simple - uni1EA0</span><span>51098 glyphs</span></footer>

<section class="win tagwin">
  <div class="cap"><span></span><button>x</button></div>
  <div class="trow"><span class="fld"></span><span class="tb"><svg viewBox="0 0 20 24"><use href="#tag" width="20" height="22"/><use href="#bolt" y="12" width="9" height="12"/></svg></span></div>
  <div class="trow two"><span class="fld code">$00, $00, $1D</span><span class="tb"><svg><use href="#unicode"/></svg></span><span class="tb"><svg><use href="#tag"/></svg></span></div>
</section>

<section class="win preview">
  <div class="cap"><span>Preview</span><button>x</button></div>
  <div class="opts">
    <div class="sel1">Auto<svg class="chev" viewBox="0 0 10 6"><path d="M.5.5L5 5 9.500.5"/></svg></div>
    <div class="sel1">Auto<svg class="chev" viewBox="0 0 10 6"><path d="M.5.5L5 5 9.500.5"/></svg></div>
    <div class="sel1 cust">Custom<svg class="chev" viewBox="0 0 10 6"><path d="M.5.5L5 5 9.500.5"/></svg></div>
    <div class="spin">1<span><svg viewBox="0 0 16 13"><path d="M8 4l4 5H4z"/></svg><svg viewBox="0 0 16 13"><path d="M8 9l4-5H4z"/></svg></span></div>
    <div class="spin wide">24<span><svg viewBox="0 0 16 13"><path d="M8 4l4 5H4z"/></svg><svg viewBox="0 0 16 13"><path d="M8 9l4-5H4z"/></svg></span></div>
    <div class="txt"><span>12:34 한국어俨骖𬴂而上路 绝𪩘多生怪柏 𫐓以为轮 ABCDEFGHIJKLMNOPQRSTUVWXYZabcdefghijklmno</span><svg class="chev" viewBox="0 0 10 6"><path d="M.5.5L5 5 9.500.5"/></svg></div>
  </div>
  <div class="body">
    <div class="list"></div>
    <div class="psplit"><u></u></div>
    <div class="pane">
      <div class="sample">
        <p><span class="num">12:34 </span><span class="han">한국어</span>俨骖𬴂而上路 绝𪩘多生怪柏 𫐓以为轮</p>
        <p class="abc">ABCDEFGHIJKLMNOPQRSTUVWXYZabcdefghijklmnopqrstuvwxyz</p>
        <p>拉<span class="quo">“</span>黑<span class="quo">”</span>请三项拉全，让我看不见你的动态！</p>
        <p>反馈时请提供问题截图并提供复现步骤。</p>
        <p>拉黑請三項拉全，讓我看不見你的動態！</p>
        <p>回饋時請提供問題截圖並提供複現步驟。 浐灞钢镚焗油啰嗦 凩凪売価</p>
        <p>アイウエオ渋桜曽産あいうえお 最 关复门朵剁垛跺躲 劲茎径甩𬌗</p>
        <p class="num">1234567890ABC</p>
      </div>
      <div class="path">/one/two/colon/three/four/space/uniD55C/uniAD6D/uniC5B4/uni4FE8/uni9A96/u2CD02/uni2F7D/uni4E0A/uni8DEF/space/uni7EDD/u2AA58/uni591A/uni2F63</div>
    </div>
  </div>
</section>
</body>
</html>
```
FILE: styles.css
```css
* { box-sizing: border-box; }
body { margin: 0; width: 1920px; height: 1030px; overflow: hidden; display: flex; flex-direction: column; background: #f0f0f0; color: #000; font: 15px/22px "Noto Sans", "Noto Sans CJK SC", sans-serif; position: relative; }
.defs { position: absolute; width: 0; height: 0; }
h1, h2, p, ul { margin: 0; padding: 0; font-weight: normal; }
.titlebar { height: 29px; background: #5a4b1b; color: #fff; display: flex; align-items: center; padding-left: 2px; flex: none; }
.titlebar h1 { font-size: 15px; letter-spacing: .155px; -webkit-text-stroke: .35px #fff; margin: 0 0 2px 5px; flex: 1; white-space: nowrap; }
.titlebar .app { width: 20px; height: 20px; }
.wctl { width: 170px; height: 29px; fill: none; stroke: #fff; }
.menubar { height: 29px; border-top: 1px solid #fff; display: flex; align-items: center; flex: none; padding-left: 9px; gap: 16px; font-size: 14.700px; }
.menubar span { margin-right: -.2px; }
.menubar .app { width: 20px; height: 20px; margin-right: -7px; }
.mdi { width: 52px; height: 16px; margin: 0 0 0 auto; fill: none; stroke: #778899; }
.mdi .bx { fill: #fff; stroke: #e2e2e2; }
.menubar, .bar { background: radial-gradient(circle, #b4b4b4 1px, transparent 1.300px) 2px 5px / 4px 4px no-repeat; background-repeat: repeat-y; }

.bars { flex: none; height: 122px; border-top: 1px solid #c8c8c8; }
.row { height: 40px; display: flex; }
.bar { height: 40px; border: 1px solid #c8c8c8; border-width: 0 1px 1px 0; border-top: 1px solid #fff; padding-left: 8px; display: flex; align-items: center; margin-right: 1px; }
.bar.gap { margin-left: 5px; }
.bar b { width: 37px; height: 36px; display: flex; align-items: center; padding-left: 4px; font-weight: normal; flex: none; }
.bar b svg { width: 30px; height: 30px; flex: none; overflow: visible; }
.bar i { width: 6px; height: 32px; flex: none; background: linear-gradient(#808080, #808080) 2px 0 / 1px 100% no-repeat; }
.bar b.drop { width: 50px; }
.bar b.drop::after { content: ""; border: 5px solid transparent; border-top: 6px solid #808080; border-bottom: 0; margin-left: 4px; }
.bar b.drop.s { width: 45px; }
.bar b.drop.s::after { border-width: 4px 3px 0; border-top-color: #000; margin-left: 0; }
.bar b.on { background: #bddcf4; box-shadow: inset 0 0 0 1px #90c8f6; }
.bar text { font-family: "Noto Sans", sans-serif; fill: #777; }
.bar text.bt { fill: #4a80b9; }
.bar text.pt { fill: #9a68bc; }
.bar text.dt { fill: #c4c4c4; }
.g { fill: #808080; }
.d { fill: #c6c6c6; }
.df { fill: #d6d6d6; }
.gr { fill: #76a797; }
.w { fill: #fff; stroke: #8a8a8a; stroke-width: 2; }
.wd { fill: #f4f4f4; stroke: #c6c6c6; stroke-width: 2; }
.n { fill: none; stroke: #808080; stroke-width: 2; }
.n.thin { stroke-width: 1; }
.nb { fill: none; stroke: #4a80b9; }
.nd { fill: none; stroke: #c4c4c4; stroke-width: 2; }
.bar svg.anc { stroke-width: 3; }
.n[stroke-width="3"], .nd[stroke-width="3"] { stroke-width: 3; }
.n[stroke-width="5"] { stroke-width: 5; }
.nd[stroke-width="2.500"], .w[stroke-width="2.500"] { stroke-width: 2.500; }
.nd[stroke-width="4"] { stroke-width: 4; }
.w[stroke-width="1.500"] { stroke-width: 1.500; }
.zoombox { width: 90px; height: 34px; border: 1px solid #7a7a7a; background: #fff; display: flex; align-items: center; justify-content: space-between; padding: 0 5px 0 2px; }
.chev { width: 10px; height: 6px; fill: none; stroke: #555; stroke-width: 1.200; flex: none; }

.tabs { height: 30px; flex: none; border-top: 1px solid #fafafa; padding: 2px 0 0 2px; }
.tab { width: 223px; height: 27px; background: #fff; border: 1px solid #d9d9d9; border-bottom: 0; display: flex; justify-content: space-between; align-items: center; padding: 0 7px 0 6px; font-size: 15px; }
.tab svg { width: 8px; height: 8px; stroke: #555; stroke-width: 2; margin-bottom: 5px; }

main { height: 790px; flex: none; display: flex; border-top: 1px solid #c0c0c0; }
aside { width: 385px; background: #fff; display: flex; overflow: hidden; }
.tree { list-style: none; width: 366px; }
.tree li { height: 22px; width: 365px; display: flex; align-items: center; padding-right: 5px; }
.tree li.sel { background: #cfe4fd; }
.tree span { flex: 1; white-space: nowrap; font-size: 14.550px; }
.tree em { font-style: normal; font-size: 15.300px; }
.tree s { width: 23px; height: 22px; flex: none; position: relative; text-decoration: none; }
.tree s.v::before, .tree s.t::before, .tree s.l::before, .tree s.x::before { content: ""; position: absolute; left: 12px; top: 0; height: 22px; border-left: 1px dotted #999; }
.tree s.l::before, .tree s.last::before { height: 11px; }
.tree s.first::before { top: 11px; height: 11px; }
.tree s.t::after, .tree s.l::after { content: ""; position: absolute; left: 12px; top: 10px; width: 12px; border-top: 1px dotted #999; }
.tree s.x::after { content: ""; position: absolute; left: 7px; top: 5px; width: 11px; height: 11px; border: 1px solid #8f8f8f; border-radius: 1px; background: linear-gradient(#4560a8, #4560a8) 1px 4px / 7px 1px no-repeat, linear-gradient(#fff, #e4e4e4); }
.ti { width: 18px; height: 18px; margin: 0 7px 1px 4px; flex: none; }
.ti.fl { margin-left: 3px; margin-right: 8px; padding-left: 0; }
.tree q { quotes: none; width: 18px; margin: 0 7px 2px 4px; text-align: center; color: #666; line-height: 20px; }
.tree q.big { margin-bottom: 5px; -webkit-text-stroke: .4px #666; }
.red { color: #d9603f; } .orange { color: #e88d40; } .green { color: #76a797; } .purple { color: #9a68bc; } .blue { color: #4a80b9; }
.sbar { width: 19px; flex: none; background: #f0f0f0; display: flex; flex-direction: column; align-items: center; padding-top: 7px; }
.sbar svg { width: 10px; height: 6px; fill: none; stroke: #555; stroke-width: 2; flex: none; }
.thumb { width: 19px; height: 21px; background: #c1c1c1; margin-top: 8px; }
.thumb.tall { height: 216px; background: #cdcdcd; }
.sbar .dn { margin: auto 0 8px; }
.glyphs .sbar { width: 20px; padding-right: 1px; }
.split { width: 8px; display: flex; align-items: center; }
.split u, .psplit u { width: 4px; height: 28px; background: radial-gradient(circle, #a8a8a8 1px, transparent 1.300px) 0 0 / 4px 4px; }
.glyphs { flex: 1; display: flex; background: #fff; border: 1px solid #828790; border-bottom-width: 2px; overflow: hidden; }
.inner { flex: 1; height: 786px; overflow: hidden; }
.inner p { height: 22px; padding-left: 4px; font-size: 14.900px; }
.grid { display: grid; grid-template-columns: 96px repeat(14, 96px); grid-auto-rows: 128px; width: 1441px; border-top: 1px solid #a0a0a0; }
.grid > div { border: 1px solid #a0a0a0; border-width: 0 1px 1px 0; overflow: hidden; text-align: center; font: 67px/100px "Inter", sans-serif; }
.grid > div.sel { background: #cfe4fd; outline: 1px dotted #234; outline-offset: -2px; }
.grid > .sel h2 { background: linear-gradient(#bccffb, #a9bffb); }
.grid > .hid { grid-column: span 12; }
.grid h2 { height: 21px; border-bottom: 1px solid #a0a0a0; background: linear-gradient(#fff, #eee); font: 14.550px/18px "Noto Sans", sans-serif; white-space: nowrap; }

footer { height: 30px; display: flex; justify-content: space-between; align-items: center; padding: 0 8px 0 6px; }

.win { position: absolute; background: #f0f0f0; overflow: hidden; }
.cap { height: 29px; background: linear-gradient(#9cb7d3, #b9cfea); display: flex; justify-content: space-between; align-items: center; padding: 0 4px 0 2px; font-size: 14.700px; }
.cap span { margin-bottom: 2px; }
.cap button { width: 22px; height: 22px; margin-bottom: 1px; border: 0; padding: 0 0 3px; background: #c75050; color: #fff; font: bold 11px/16px "Noto Sans", sans-serif; }
.preview { left: 412px; top: 556px; width: 1319px; height: 465px; border: 1px solid #a0a0a0; border-bottom: 2px solid #8a8a8a; box-shadow: 2px 3px 10px rgba(0,0,0,.45); }
.preview .cap { border-top: 8px solid #fff; height: 37px; }
.opts { display: flex; height: 36px; padding: 5px 0 0 9px; }
.opts > div { height: 28px; display: flex; align-items: center; }
.sel1 { width: 130px; margin-right: 7px; border: 1px solid #adadad; background: #e1e1e1; justify-content: space-between; padding: 0 5px 0 4px; font-size: 14.700px; }
.cust { margin: 0 6px; }
.spin { width: 61px; border: 1px solid #7a7a7a; background: #fff; justify-content: flex-end; gap: 5px; padding-right: 1px; }
.spin.wide { width: 71px; margin: 0 9px 0 14px; }
.spin span { width: 17px; display: flex; flex-direction: column; }
.spin svg { height: 12.500px; background: #f0f0f0; border: 1px solid #b4b4b4; }
.txt { width: 728px; border: 1px solid #7a7a7a; background: #fff; padding: 0 5px 0 2px; font-size: 15px; gap: 8px; }
.txt span { flex: 1; overflow: hidden; white-space: nowrap; letter-spacing: .05px; }
.body { display: flex; height: 391px; }
.list { width: 200px; background: #fff; border: 1px solid #828790; }
.psplit { width: 7px; display: flex; align-items: center; }
.pane { flex: 1; border-top: 1px solid #a0a0a0; background: #fff; display: flex; flex-direction: column; overflow: hidden; }
.sample { flex: 1; padding: 3px 0 0 4px; font: 32px/42px "Inter", "Noto Sans CJK SC", sans-serif; white-space: nowrap; }
.sample p { height: 42px; }
.sample .num { letter-spacing: .25px; }
.sample .han { letter-spacing: -.5px; }
.sample .abc { letter-spacing: -.11px; }
.sample .quo { letter-spacing: 2.800px; }
.path { height: 27px; background: #f0f0f0; border-top: 1px solid #828790; border-left: 1px solid #828790; padding-left: 2px; line-height: 23px; white-space: nowrap; font-size: 15.100px; }
.tagwin { left: 1439px; top: 944px; width: 384px; height: 96px; border: 1px solid #222; box-shadow: inset -2px 0 0 #6fd3ee; padding-right: 2px; }
.tagwin .cap { height: 30px; }
.trow { display: flex; justify-content: flex-end; gap: 5px; padding: 11px 5px 0 0; height: 41px; }
.trow.two { padding-top: 2px; }
.fld { width: 300px; height: 29px; border: 1px solid #7a7a7a; background: #fff; }
.fld.code { width: 171px; padding: 4px 2px; line-height: 20px; }
.tb { width: 29px; height: 29px; background: #e1e1e1; border: 1px solid #adadad; display: flex; align-items: center; justify-content: center; }
.tb svg { width: 20px; height: 22px; }
```
